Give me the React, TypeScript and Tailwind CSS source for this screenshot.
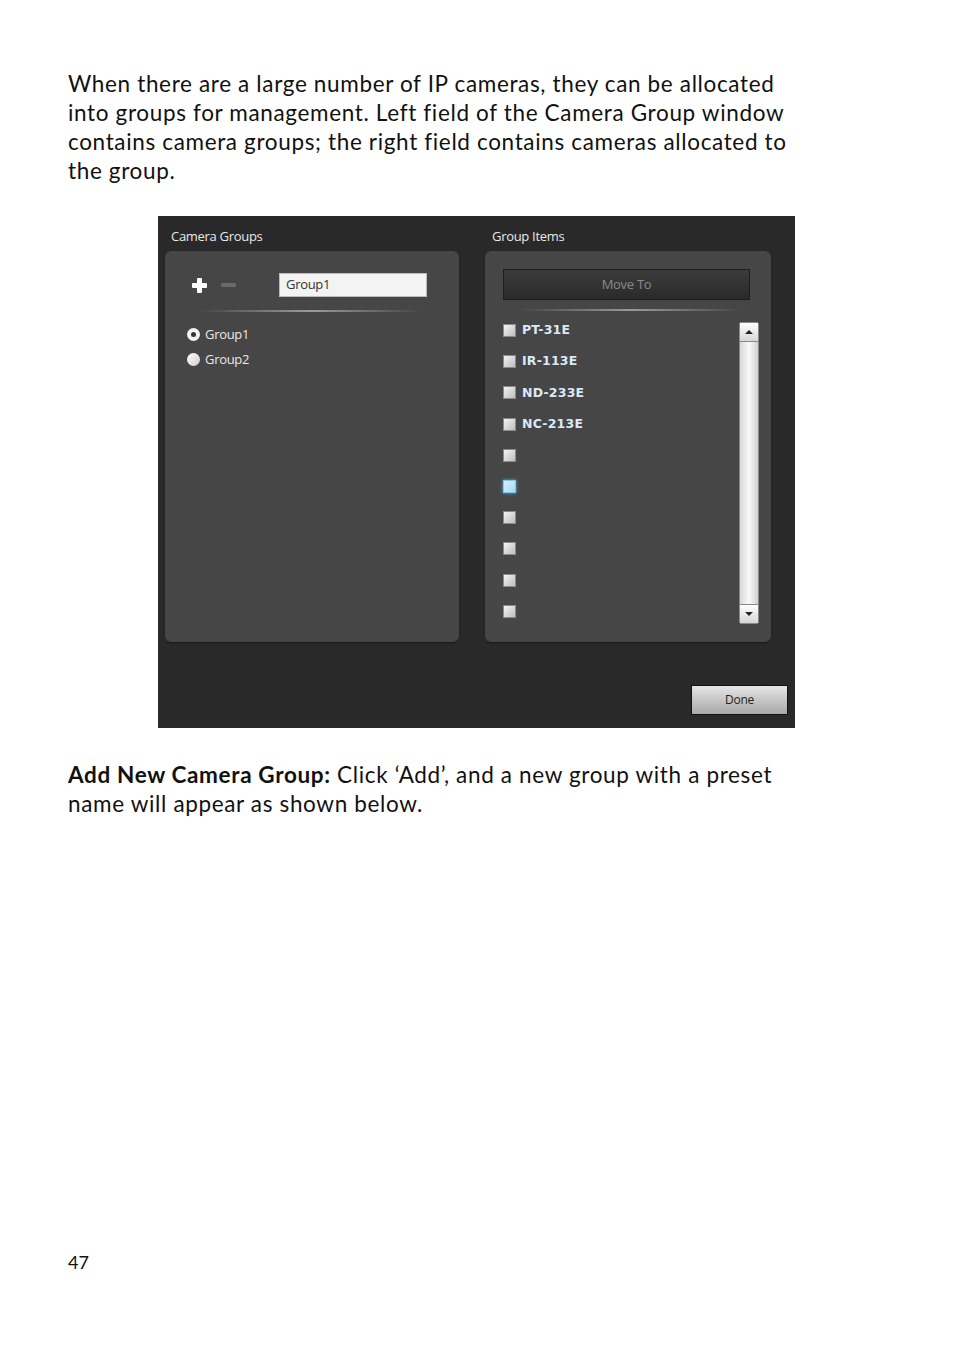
import React from "react";

const body = { fontFamily: "Lato, 'Open Sans', sans-serif" } as React.CSSProperties;
const ui = { fontFamily: "'Open Sans', 'DejaVu Sans', sans-serif" } as React.CSSProperties;
const mono = { fontFamily: "'DejaVu Sans', Verdana, sans-serif" } as React.CSSProperties;

function Checkbox({ active }: { active?: boolean }) {
  return (
    <div
      className={
        active
          ? "w-[13px] h-[13px] border border-[#7ec8f0] bg-gradient-to-br from-[#d8f0ff] to-[#a8d8f4] shadow-[0_0_3px_#5ab0e8]"
          : "w-[13px] h-[13px] border border-[#8a8a8a] bg-gradient-to-br from-[#f4f4f4] to-[#bdbdbd]"
      }
    />
  );
}

function Separator({ className }: { className: string }) {
  return (
    <div
      className={
        "h-[2px] bg-gradient-to-r from-transparent via-[#9a9a9a] to-transparent " + className
      }
    />
  );
}

export default function App() {
  const items = ["PT-31E", "IR-113E", "ND-233E", "NC-213E", "", "", "", "", "", ""];
  return (
    <div className="w-[954px] h-[1350px] bg-white relative">
      <div className="pt-[69px] pl-[68px] text-[22.5px] leading-[29px] tracking-[0.65px] text-[#111] whitespace-nowrap" style={body}>
        <div>When there are a large number of IP cameras, they can be allocated</div>
        <div>into groups for management. Left field of the Camera Group window</div>
        <div>contains camera groups; the right field contains cameras allocated to</div>
        <div>the group.</div>
      </div>

      {/* Dialog */}
      <div className="ml-[158px] mt-[31px] w-[637px] h-[512px] bg-[#292929] flex flex-col" style={ui}>
        <div className="flex pl-[7px]">
          {/* Left column */}
          <div className="w-[294px] flex flex-col">
            <div className="h-[35px] pt-[12px] pl-[6px] text-[13px] leading-[16px] text-[#e8e8e8] tracking-[-0.3px]">
              Camera Groups
            </div>
            <div className="h-[391px] rounded-[6px] bg-[#464646] shadow-[0_1px_2px_#1a1a1a] flex flex-col">
              <div className="flex items-center pt-[22px] h-[46px]">
                <div className="ml-[27px] w-[15px] h-[15px] relative">
                  <div className="absolute left-[5px] top-0 w-[5px] h-[15px] bg-white rounded-[1px]" />
                  <div className="absolute left-0 top-[5px] w-[15px] h-[5px] bg-white rounded-[1px]" />
                </div>
                <div className="ml-[14px] w-[15px] h-[4px] bg-[#6a6a6a] rounded-[1px]" />
                <div className="ml-[43px] w-[148px] h-[24px] bg-[#f3f3f3] border border-[#bbb] flex items-center pl-[6px] text-[13px] text-[#333] tracking-[-0.3px]">
                  Group1
                </div>
              </div>
              <Separator className="mt-[13px] ml-[35px] w-[222px]" />
              <div className="mt-[10px] flex flex-col text-[13px] text-[#e8e8e8] tracking-[-0.3px]">
                <div className="flex items-center h-[25px] pl-[22px]">
                  <div className="w-[13px] h-[13px] rounded-full bg-[#f2f2f2] flex items-center justify-center">
                    <div className="w-[5px] h-[5px] rounded-full bg-[#333]" />
                  </div>
                  <span className="ml-[5px]">Group1</span>
                </div>
                <div className="flex items-center h-[25px] pl-[22px]">
                  <div className="w-[13px] h-[13px] rounded-full bg-gradient-to-br from-white to-[#cfcfcf]" />
                  <span className="ml-[5px]">Group2</span>
                </div>
              </div>
            </div>
          </div>

          {/* Right column */}
          <div className="w-[286px] ml-[26px] flex flex-col">
            <div className="h-[35px] pt-[12px] pl-[7px] text-[13px] leading-[16px] text-[#e8e8e8] tracking-[-0.3px]">
              Group Items
            </div>
            <div className="h-[391px] rounded-[6px] bg-[#464646] shadow-[0_1px_2px_#1a1a1a] flex flex-col">
              <div className="mt-[18px] ml-[18px] w-[247px] h-[31px] border border-[#1e1e1e] bg-gradient-to-b from-[#3c3c3c] to-[#2a2a2a] flex items-center justify-center text-[13px] text-[#8a8a8a] tracking-[-0.3px]">
                Move To
              </div>
              <Separator className="mt-[9px] ml-[35px] w-[222px]" />
              <div className="flex mt-[4px]">
                <div className="flex-1 flex flex-col pl-[18px]">
                  {items.map((t, i) => (
                    <div key={i} className="h-[31.2px] flex items-center">
                      <Checkbox active={i === 5} />
                      {t && (
                        <span className="ml-[6px] text-[12.5px] font-semibold text-[#dce8f8] tracking-[0.2px]" style={mono}>
                          {t}
                        </span>
                      )}
                    </div>
                  ))}
                </div>
                <div className="mt-[7px] mr-[12px] w-[20px] h-[302px] border border-[#8a8a8a] rounded-[2px] bg-gradient-to-r from-[#d8d8d8] via-[#fafafa] to-[#d0d0d0] flex flex-col justify-between">
                  <div className="h-[19px] border-b border-[#888] bg-gradient-to-b from-white to-[#d6d6d6] flex items-center justify-center">
                    <div className="w-0 h-0 border-l-[4px] border-r-[4px] border-b-[4px] border-l-transparent border-r-transparent border-b-[#222]" />
                  </div>
                  <div className="h-[19px] border-t border-[#888] bg-gradient-to-b from-white to-[#d6d6d6] flex items-center justify-center">
                    <div className="w-0 h-0 border-l-[4px] border-r-[4px] border-t-[4px] border-l-transparent border-r-transparent border-t-[#222]" />
                  </div>
                </div>
              </div>
            </div>
          </div>
        </div>
        <div className="flex justify-end pr-[7px] mt-[43px]">
          <div className="w-[97px] h-[30px] border border-[#111] bg-gradient-to-b from-[#e6e6e6] to-[#a8a8a8] flex items-center justify-center text-[12px] text-[#222] tracking-[-0.3px]">
            Done
          </div>
        </div>
      </div>

      <div className="pt-[32px] pl-[68px] text-[22.5px] leading-[29px] tracking-[0.65px] text-[#111] whitespace-nowrap" style={body}>
        <div>
          <span className="font-bold">Add New Camera Group:</span> Click ‘Add’, and a new group with a preset
        </div>
        <div>name will appear as shown below.</div>
      </div>

      <div className="absolute left-[68px] top-[1250px] text-[18px] leading-[24px] text-[#111]" style={body}>
        47
      </div>
    </div>
  );
}
